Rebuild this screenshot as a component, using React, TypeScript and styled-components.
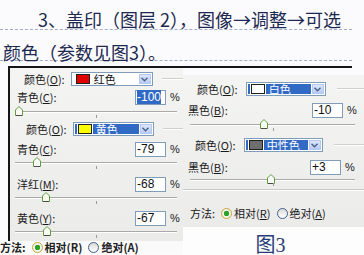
import React from 'react';
import styled, { createGlobalStyle } from 'styled-components';

const GlobalStyle = createGlobalStyle`
  html, body {
    margin: 0;
    padding: 0;
    background: #fbfbfd;
  }
  body {
    width: 364px;
    height: 255px;
    overflow: hidden;
    font-family: "Noto Sans CJK SC", "Noto Sans", sans-serif;
  }
`;

const Page = styled.div`
  width: 364px;
  height: 255px;
  overflow: hidden;
`;

const Caption = styled.div`
  width: 352px;
  color: #1d2950;
  font-size: 18px;
`;

const CaptionLine = styled.div<{ $indent: number; $height: number; $pad: number }>`
  height: ${(p) => p.$height - p.$pad}px;
  padding: ${(p) => p.$pad}px 0 0 ${(p) => p.$indent}px;
  line-height: 18px;
  border-bottom: 1px dashed #a3acc8;
  white-space: nowrap;
`;

const Shots = styled.div`
  display: flex;
  align-items: flex-start;
  width: 344px;
  height: 187px;
  margin: 5px 0 0 8px;
  border-top: 2px solid #151515;
`;

const LeftShot = styled.div`
  flex: 0 0 175px;
  display: flex;
  flex-direction: column;
`;

const Panel = styled.div<{ $height: number }>`
  height: ${(p) => p.$height}px;
  display: flex;
  flex-direction: column;
  background: linear-gradient(#f4f4f3, #ebebea);
  font-size: 11px;
  color: #1a1a1a;
  overflow: hidden;
`;

const LeftPanel = styled(Panel)`
  border-left: 2px solid #151515;
`;

const RightShot = styled.div`
  flex: 0 0 181px;
  margin-top: 7px;
  height: 180px;
  display: flex;
  flex-direction: column;
  border-right: 2px solid #151515;
  background: #fdfdfd;
`;

const GroupHead = styled.div<{ $top: number; $pad: number; $gap: number }>`
  display: flex;
  align-items: center;
  height: 14px;
  margin-top: ${(p) => p.$top}px;
  padding-left: ${(p) => p.$pad}px;
  gap: ${(p) => p.$gap}px;
`;

const Label = styled.span`
  white-space: nowrap;
  line-height: 14px;
  u {
    text-decoration: underline;
    text-underline-offset: 1px;
  }
`;

const GroupLine = styled.div`
  flex: 1;
  height: 0;
  margin-left: 3px;
  border-top: 1px solid #cfcfcf;
  border-bottom: 1px solid #ffffff;
`;

const Dropdown = styled.div<{ $width: number }>`
  display: flex;
  width: ${(p) => p.$width}px;
  height: 14px;
  box-sizing: border-box;
  border: 1px solid #7f9db9;
  background: #fff;
  padding: 1px;
  gap: 1px;
`;

const Field = styled.div<{ $selected: boolean }>`
  flex: 1;
  display: flex;
  align-items: center;
  gap: 4px;
  padding-left: 3px;
  background: ${(p) => (p.$selected ? '#316ac5' : '#fff')};
  color: ${(p) => (p.$selected ? '#fff' : '#111')};
  font-size: 11px;
  line-height: 10px;
`;

const Swatch = styled.span<{ $color: string }>`
  width: 12px;
  height: 8px;
  background: ${(p) => p.$color};
  border: 1px solid #202020;
  box-shadow: 0 0 0 1px #fff;
`;

const ArrowButton = styled.div`
  width: 12px;
  display: flex;
  align-items: center;
  justify-content: center;
  background: linear-gradient(#dce7fd, #b7cbf5);
  border: 1px solid #b4c8f2;
  box-sizing: border-box;
`;

const ValueRow = styled.div<{ $top: number; $pad: number; $right: number }>`
  display: flex;
  align-items: center;
  height: 14px;
  margin-top: ${(p) => p.$top}px;
  padding: 0 ${(p) => p.$right}px 0 ${(p) => p.$pad}px;
`;

const Grow = styled.span`
  flex: 1;
  white-space: nowrap;
  line-height: 14px;
  u {
    text-underline-offset: 1px;
  }
`;

const Input = styled.div`
  width: 31px;
  height: 15px;
  box-sizing: border-box;
  border: 1px solid #7f9db9;
  background: #fff;
  font-family: "Liberation Sans", Arial, sans-serif;
  font-size: 12px;
  line-height: 13px;
  padding-left: 1px;
  color: #111;
`;

const Selected = styled.span`
  background: #316ac5;
  color: #fff;
`;

const Percent = styled.span`
  width: 10px;
  margin-left: 4px;
  font-family: "Liberation Sans", Arial, sans-serif;
  font-size: 11px;
`;

const SliderRow = styled.div<{ $top: number; $left: number; $right: number }>`
  height: 12px;
  margin-top: ${(p) => p.$top}px;
  padding: 0 ${(p) => p.$right}px 0 ${(p) => p.$left}px;
`;

const Track = styled.div`
  position: relative;
  top: 6px;
  height: 0;
  border-top: 1px solid #a9a9a9;
  border-bottom: 1px solid #ffffff;
  &::after {
    content: '';
    position: absolute;
    left: 50%;
    top: 3px;
    width: 1px;
    height: 3px;
    background: #9a9a9a;
  }
`;

const Thumb = styled.svg`
  position: absolute;
  top: -6px;
`;

const Separator = styled.div<{ $top: number }>`
  margin-top: ${(p) => p.$top}px;
  border-top: 1px solid #c9c9c9;
  border-bottom: 1px solid #fff;
`;

const MethodRow = styled.div<{ $top: number; $pad: number }>`
  display: flex;
  align-items: center;
  height: 14px;
  margin-top: ${(p) => p.$top}px;
  padding-left: ${(p) => p.$pad}px;
  font-size: 11px;
  white-space: nowrap;
  u {
    text-underline-offset: 1px;
  }
`;

const Radio = styled.span<{ $checked: boolean }>`
  width: 9px;
  height: 9px;
  margin: 0 2px 0 6px;
  border-radius: 50%;
  border: 1px solid ${(p) => (p.$checked ? '#c9a53a' : '#3f5f8f')};
  background: ${(p) =>
    p.$checked
      ? 'radial-gradient(circle, #2ca32c 0 2.5px, #f2f5e9 3px)'
      : 'linear-gradient(#dcdcd6, #fff)'};
`;

const CutRow = styled.div`
  margin-left: -8px;
  height: 13px;
  display: flex;
  align-items: center;
  background: #fafafa;
  font-size: 11px;
  line-height: 13px;
  font-weight: 700;
  color: #222;
  white-space: nowrap;
`;

const Figure = styled.div`
  flex: 1;
  text-align: center;
  padding: 8px 6px 0 0;
  font-family: "Liberation Serif", "Noto Sans CJK SC", serif;
  font-size: 20px;
  line-height: 20px;
  color: #2a3c78;
`;

const Chevron = () => (
  <svg width="7" height="5" viewBox="0 0 7 5">
    <path d="M0.5 0.8 L3.5 3.8 L6.5 0.8" fill="none" stroke="#4d6185" strokeWidth="1.4" />
  </svg>
);

const SliderThumb = ({ at }: { at: number }) => (
  <Thumb width="8" height="10" viewBox="0 0 8 10" style={{ left: at }}>
    <path d="M0.5 9.5 V4 L4 0.5 L7.5 4 V9.5 Z" fill="#fbfbf6" stroke="#5f9d3c" />
    <path d="M1 9.5 H7" stroke="#4a4a4a" />
  </Thumb>
);

const Mn = ({ children }: { children: React.ReactNode }) => <u>{children}</u>;

type Pick = { swatch: string; name: string; selected: boolean };

const ColorPick = ({
  top,
  pad,
  gap,
  width,
  pick,
}: {
  top: number;
  pad: number;
  gap: number;
  width: number;
  pick: Pick;
}) => (
  <GroupHead $top={top} $pad={pad} $gap={gap}>
    <Label>
      颜色(<Mn>O</Mn>):
    </Label>
    <Dropdown $width={width}>
      <Field $selected={pick.selected}>
        <Swatch $color={pick.swatch} />
        {pick.name}
      </Field>
      <ArrowButton>
        <Chevron />
      </ArrowButton>
    </Dropdown>
    <GroupLine />
  </GroupHead>
);

const Value = ({
  top,
  pad,
  right,
  name,
  mn,
  children,
}: {
  top: number;
  pad: number;
  right: number;
  name: string;
  mn: string;
  children: React.ReactNode;
}) => (
  <ValueRow $top={top} $pad={pad} $right={right}>
    <Grow>
      {name}(<Mn>{mn}</Mn>):
    </Grow>
    <Input>{children}</Input>
    <Percent>%</Percent>
  </ValueRow>
);

const Slider = ({ top, left, right, at }: { top: number; left: number; right: number; at: number }) => (
  <SliderRow $top={top} $left={left} $right={right}>
    <Track>
      <SliderThumb at={at} />
    </Track>
  </SliderRow>
);

export default function App() {
  return (
    <>
      <GlobalStyle />
      <Page>
        <Caption>
          <CaptionLine $indent={38} $height={29} $pad={10}>
            3、盖印（图层 2），图像→调整→可选
          </CaptionLine>
          <CaptionLine $indent={3} $height={30} $pad={13}>
            颜色（参数见图3）。
          </CaptionLine>
        </Caption>

        <Shots>
          <LeftShot>
            <LeftPanel $height={173}>
              <ColorPick top={4} pad={14} gap={6} width={82} pick={{ swatch: '#e00000', name: '红色', selected: false }} />
              <Value top={4} pad={7} right={3} name="青色" mn="C">
                <Selected>-100</Selected>
              </Value>
              <Slider top={1} left={5} right={6} at={0} />
              <ColorPick top={5} pad={16} gap={6} width={81} pick={{ swatch: '#ffff00', name: '黄色', selected: true }} />
              <Value top={6} pad={7} right={3} name="青色" mn="C">
                -79
              </Value>
              <Slider top={0} left={5} right={6} at={18} />
              <Value top={9} pad={7} right={3} name="洋红" mn="M">
                -68
              </Value>
              <Slider top={0} left={5} right={6} at={27} />
              <Value top={8} pad={7} right={3} name="黄色" mn="Y">
                -67
              </Value>
              <Slider top={0} left={5} right={6} at={28} />
            </LeftPanel>
            <CutRow>
              方法:
              <Radio $checked />
              相对(R)
              <Radio $checked={false} />
              绝对(A)
            </CutRow>
          </LeftShot>

          <RightShot>
            <Panel $height={152}>
              <ColorPick top={7} pad={14} gap={8} width={80} pick={{ swatch: '#ffffff', name: '白色', selected: true }} />
              <Value top={7} pad={5} right={7} name="黑色" mn="B">
                -10
              </Value>
              <Slider top={1} left={7} right={9} at={70} />
              <ColorPick top={8} pad={12} gap={8} width={79} pick={{ swatch: '#6e6e6e', name: '中性色', selected: true }} />
              <Value top={8} pad={5} right={9} name="黑色" mn="B">
                +3
              </Value>
              <Slider top={-1} left={7} right={9} at={77} />
              <Separator $top={4} />
              <MethodRow $top={15} $pad={7}>
                方法:
                <Radio $checked />
                相对(<Mn>R</Mn>)
                <Radio $checked={false} />
                绝对(<Mn>A</Mn>)
              </MethodRow>
            </Panel>
            <Figure>图3</Figure>
          </RightShot>
        </Shots>
      </Page>
    </>
  );
}
